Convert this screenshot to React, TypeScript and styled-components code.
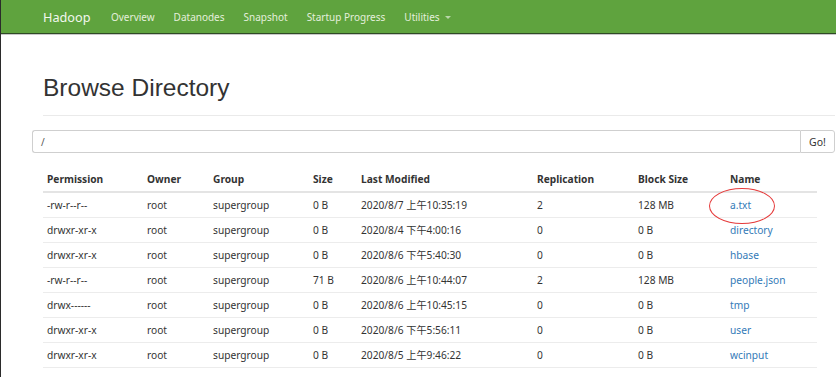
import styled, { createGlobalStyle } from "styled-components";

const GlobalStyle = createGlobalStyle`
  body {
    margin: 0;
    background: #fff;
    font-family: "Noto Sans", "Noto Sans CJK SC", sans-serif;
    color: #333;
  }
`;

const Page = styled.div`
  width: 836px;
  height: 377px;
  overflow: hidden;
  border-left: 1px solid #2b2b2b;
  box-sizing: border-box;
`;

const NavBar = styled.div`
  height: 33px;
  background: #5fa33e;
  border-bottom: 1px solid #2e4a25;
  box-shadow: 0 1px 0 #c8c8c8;
  display: flex;
  align-items: stretch;
  padding-left: 31px;
`;

const Brand = styled.div`
  font-size: 12.7px;
  color: #f2f7ee;
  display: flex;
  align-items: center;
  padding: 0 11px;
  margin-right: 0;
`;

const NavItem = styled.div`
  font-size: 10px;
  color: #e4efdc;
  display: flex;
  align-items: center;
  padding: 0 9.5px;
`;

const Caret = styled.span`
  display: inline-block;
  margin-left: 5px;
  border-top: 3px solid #b9d6a9;
  border-left: 3px solid transparent;
  border-right: 3px solid transparent;
  margin-top: 2px;
`;

const Content = styled.div`
  padding: 0 1px 0 31px;
`;

const Header = styled.div`
  margin-left: 11px;
  margin-top: 39px;
  padding-bottom: 12px;
  border-bottom: 1px solid #eaeaea;
`;

const Title = styled.h1`
  margin: 0;
  font-family: "Liberation Sans", Arial, sans-serif;
  font-weight: 400;
  font-size: 24.5px;
  line-height: 30px;
  color: #333;
`;

const SearchGroup = styled.div`
  display: flex;
  margin-top: 14px;
  height: 23px;
`;

const SearchInput = styled.div`
  flex: 1;
  border: 1px solid #cfcfcf;
  border-right: none;
  border-radius: 3px 0 0 3px;
  font-size: 10px;
  color: #555;
  display: flex;
  align-items: center;
  padding-left: 8px;
`;

const GoButton = styled.div`
  width: 33px;
  border: 1px solid #cfcfcf;
  border-radius: 0 3px 3px 0;
  font-size: 10.5px;
  color: #333;
  display: flex;
  align-items: center;
  justify-content: center;
`;

const Table = styled.table`
  margin: 14px 19px 0 11px;
  width: calc(100% - 30px);
  table-layout: fixed;
  border-collapse: collapse;
  font-size: 10.2px;
`;

const Th = styled.th`
  text-align: left;
  font-weight: 700;
  padding: 5px 4px;
  line-height: 14px;
  border-bottom: 2px solid #e4e4e4;
  white-space: nowrap;
`;

const Td = styled.td`
  padding: 5px 4px;
  line-height: 14px;
  border-bottom: 1px solid #ececec;
  white-space: nowrap;
  color: #333;
`;

const NameCell = styled(Td)`
  position: relative;
`;

const FileLink = styled.span`
  color: #337ab7;
`;

const Circle = styled.span`
  position: absolute;
  left: -17px;
  top: -5px;
  width: 66px;
  height: 36px;
  border: 1.5px solid #e53a3a;
  border-radius: 50%;
  box-sizing: border-box;
`;

interface Entry {
  perm: string;
  size: string;
  modified: string;
  repl: string;
  block: string;
  name: string;
}

const entries: Entry[] = [
  { perm: "-rw-r--r--", size: "0 B", modified: "2020/8/7 上午10:35:19", repl: "2", block: "128 MB", name: "a.txt" },
  { perm: "drwxr-xr-x", size: "0 B", modified: "2020/8/4 下午4:00:16", repl: "0", block: "0 B", name: "directory" },
  { perm: "drwxr-xr-x", size: "0 B", modified: "2020/8/6 下午5:40:30", repl: "0", block: "0 B", name: "hbase" },
  { perm: "-rw-r--r--", size: "71 B", modified: "2020/8/6 上午10:44:07", repl: "2", block: "128 MB", name: "people.json" },
  { perm: "drwx------", size: "0 B", modified: "2020/8/6 上午10:45:15", repl: "0", block: "0 B", name: "tmp" },
  { perm: "drwxr-xr-x", size: "0 B", modified: "2020/8/6 下午5:56:11", repl: "0", block: "0 B", name: "user" },
  { perm: "drwxr-xr-x", size: "0 B", modified: "2020/8/5 上午9:46:22", repl: "0", block: "0 B", name: "wcinput" },
];

const colWidths = [100, 66, 100, 48, 176, 101, 92, 91];

export default function App() {
  return (
    <Page>
      <GlobalStyle />
      <NavBar>
        <Brand>Hadoop</Brand>
        <NavItem>Overview</NavItem>
        <NavItem>Datanodes</NavItem>
        <NavItem>Snapshot</NavItem>
        <NavItem>Startup Progress</NavItem>
        <NavItem>
          Utilities
          <Caret />
        </NavItem>
      </NavBar>
      <Content>
        <Header>
          <Title>Browse Directory</Title>
        </Header>
        <SearchGroup>
          <SearchInput>/</SearchInput>
          <GoButton>Go!</GoButton>
        </SearchGroup>
        <Table>
          <colgroup>
            {colWidths.map((w, i) => (
              <col key={i} style={{ width: w }} />
            ))}
          </colgroup>
          <thead>
            <tr>
              <Th>Permission</Th>
              <Th>Owner</Th>
              <Th>Group</Th>
              <Th>Size</Th>
              <Th>Last Modified</Th>
              <Th>Replication</Th>
              <Th>Block Size</Th>
              <Th>Name</Th>
            </tr>
          </thead>
          <tbody>
            {entries.map((e, i) => (
              <tr key={e.name}>
                <Td>{e.perm}</Td>
                <Td>root</Td>
                <Td>supergroup</Td>
                <Td>{e.size}</Td>
                <Td>{e.modified}</Td>
                <Td>{e.repl}</Td>
                <Td>{e.block}</Td>
                <NameCell>
                  {i === 0 && <Circle />}
                  <FileLink>{e.name}</FileLink>
                </NameCell>
              </tr>
            ))}
          </tbody>
        </Table>
      </Content>
    </Page>
  );
}
